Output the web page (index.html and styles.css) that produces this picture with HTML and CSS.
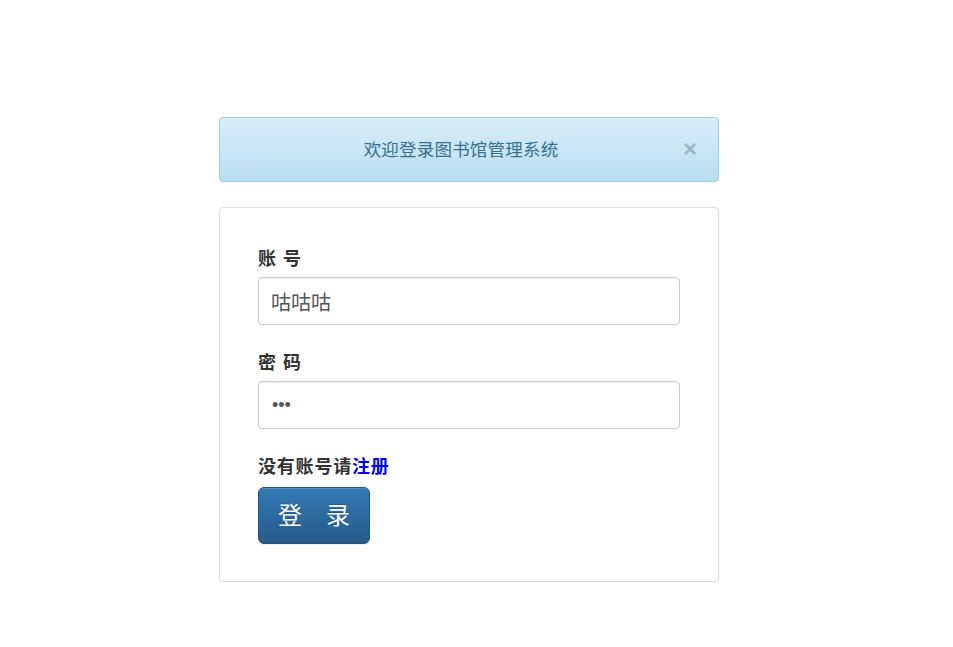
FILE: index.html
```html
<!DOCTYPE html>
<html>
<head>
	<meta charset="utf-8">
	<title>图书馆管理系统</title>
	<link rel="stylesheet" href="styles.css">
</head>
<body>
	<div class="wrap">
		<!--welcome alert with a close button-->
		<div class="alert">
			<span class="alert-text">欢迎登录图书馆管理系统</span>
			<button class="close">&times;</button>
		</div>
		<!--login form-->
		<div class="panel">
			<form class="login-form">
				<div class="field">
					<label>账 号</label>
					<input type="text" value="咕咕咕">
				</div>
				<div class="field">
					<label>密 码</label>
					<input type="password" class="pwd" value="123">
				</div>
				<p class="register">没有账号请<a href="#">注册</a></p>
				<button type="button" class="login-btn">登　录</button>
			</form>
		</div>
	</div>
</body>
</html>
```

FILE: styles.css
```css
body {
	margin: 0;
	background: #fff;
	font-family: "Helvetica Neue", "Liberation Sans", "Noto Sans CJK SC", sans-serif;
	color: #333;
}
.wrap {
	width: 500px;
	margin: 117px 0 0 219px;
}
.alert {
	position: relative;
	height: 65px;
	box-sizing: border-box;
	padding: 0 35px 0 15px;
	display: flex;
	align-items: center;
	justify-content: center;
	background-image: linear-gradient(to bottom, #d9edf7 0, #b9def0 100%);
	border: 1px solid #9acfea;
	border-radius: 4px;
	box-shadow: inset 0 1px 0 rgba(255,255,255,.25), 0 1px 2px rgba(0,0,0,.05);
	color: #31708f;
	margin-bottom: 25px;
}
.alert-text {
	font-size: 17.5px;
	letter-spacing: 0.2px;
	margin-left: 4px;
	margin-top: -2px;
	text-shadow: 0 1px 0 rgba(255,255,255,.2);
}
.close {
	position: absolute;
	right: 21px;
	top: 19px;
	background: none;
	border: none;
	padding: 0;
	font-size: 24px;
	font-weight: bold;
	line-height: 1;
	color: #000;
	opacity: .2;
	cursor: pointer;
	font-family: "Liberation Sans", sans-serif;
}
.panel {
	border: 1px solid #ddd;
	border-radius: 4px;
	box-shadow: 0 1px 2px rgba(0,0,0,.05);
	padding: 41px 38px 37px 38px;
}
.field {
	margin-bottom: 28px;
}
.field label {
	display: block;
	font-size: 18px;
	font-weight: bold;
	line-height: 20px;
	letter-spacing: 1px;
	margin-bottom: 8px;
}
.field input {
	display: block;
	width: 422px;
	height: 48px;
	box-sizing: border-box;
	padding: 10px 12px;
	font-size: 20px;
	font-family: "Noto Sans CJK SC", sans-serif;
	color: #555;
	border: 1px solid #ccc;
	border-radius: 4px;
	box-shadow: inset 0 1px 1px rgba(0,0,0,.075);
}
.field input.pwd {
	font-family: "Liberation Sans", sans-serif;
	font-size: 18px;
	padding-left: 13px;
}
.register {
	margin: 0 0 10px;
	font-size: 18px;
	font-weight: bold;
	line-height: 20px;
	letter-spacing: 0.8px;
}
.register a {
	color: #00f;
	text-decoration: none;
}
.login-btn {
	width: 112px;
	height: 57px;
	padding: 0 0 5px;
	font-size: 24px;
	font-family: "Noto Sans CJK SC", sans-serif;
	color: #fff;
	background-image: linear-gradient(to bottom, #337ab7 0, #265a88 100%);
	border: 1px solid #245580;
	border-radius: 6px;
	text-shadow: 0 -1px 0 rgba(0,0,0,.2);
	box-shadow: inset 0 1px 0 rgba(255,255,255,.15), 0 1px 1px rgba(0,0,0,.075);
	cursor: pointer;
}
```
